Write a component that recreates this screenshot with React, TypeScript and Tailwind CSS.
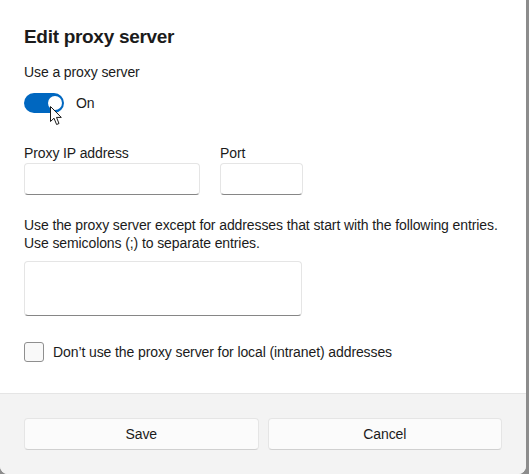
import { useState } from "react";

const FONT = { fontFamily: '"Liberation Sans", "Segoe UI", sans-serif' };

function Toggle({ on, onChange }: { on: boolean; onChange: (v: boolean) => void }) {
  return (
    <button
      className={`relative flex h-5 w-10 items-center rounded-full ${on ? "bg-[#0067c0]" : "border border-[#8a8a8a] bg-white"}`}
      onClick={() => onChange(!on)}
    >
      <span
        className={`absolute h-[14px] w-[14px] rounded-full ${on ? "left-[24px] bg-white" : "left-[4px] bg-[#5d5d5d]"}`}
      />
    </button>
  );
}

// Windows arrow pointer sitting over the toggle
function Pointer() {
  return (
    <svg className="pointer-events-none absolute left-[26px] top-[13px]" width="13" height="20" viewBox="0 0 13 20">
      <path
        d="M0.5 0.5 L0.5 15.5 L4 12.2 L6.6 18.5 L9 17.5 L6.5 11.4 L11.3 11.4 Z"
        fill="white"
        stroke="#1a1a1a"
        strokeWidth="1"
        strokeLinejoin="round"
      />
    </svg>
  );
}

function TextInput({ className }: { className: string }) {
  return (
    <input
      className={`rounded-[4px] border border-[#e5e5e5] border-b-[#868686] bg-white px-2 text-sm outline-none ${className}`}
    />
  );
}

export default function App() {
  const [enabled, setEnabled] = useState(true);
  const [bypassLocal, setBypassLocal] = useState(false);

  return (
    <div className="flex h-[474px] w-[529px] bg-[#8c8c8c] text-[#1b1b1b] tracking-[-0.1px]" style={FONT}>
      <div className="flex h-full w-[526px] flex-col overflow-hidden rounded-b-[8px] bg-white">
        <div className="flex flex-1 flex-col px-6 pt-[23px]">
          <h1 className="text-[19px] font-semibold leading-[28px] tracking-[-0.3px]">Edit proxy server</h1>

          <p className="mt-[11px] text-sm leading-5">Use a proxy server</p>
          <div className="relative mt-[11px] flex items-center gap-3">
            <Toggle on={enabled} onChange={setEnabled} />
            <span className="text-sm">{enabled ? "On" : "Off"}</span>
            <Pointer />
          </div>

          <div className="mt-[30px] flex gap-5">
            <label className="flex flex-col">
              <span className="text-sm leading-5">Proxy IP address</span>
              <TextInput className="h-8 w-[176px]" />
            </label>
            <label className="flex flex-col">
              <span className="text-sm leading-5">Port</span>
              <TextInput className="h-8 w-[83px]" />
            </label>
          </div>

          <p className="mt-[21px] whitespace-nowrap text-sm leading-[18px]">
            Use the proxy server except for addresses that start with the following entries.
            <br />
            Use semicolons (;) to separate entries.
          </p>
          <textarea className="mt-[9px] h-[55px] w-[278px] resize-none rounded-[4px] border border-[#e5e5e5] border-b-[#868686] bg-white px-2 py-1 text-sm outline-none" />

          <label className="mt-[26px] flex items-center gap-[9px]">
            <button
              className="h-5 w-5 rounded-[3px] border border-[#8f8f8f] bg-[#f9f9f9]"
              onClick={() => setBypassLocal(!bypassLocal)}
            >
              {bypassLocal && <span className="text-xs">✓</span>}
            </button>
            <span className="text-sm">Don&#8217;t use the proxy server for local (intranet) addresses</span>
          </label>
        </div>

        <div className="flex h-[81px] gap-[9px] border-t border-[#e5e5e5] bg-[#f3f3f3] px-6 pt-[24px]">
          <button className="h-8 flex-1 rounded-[4px] border border-[#e5e5e5] border-b-[#d0d0d0] bg-[#fbfbfb] text-sm">
            Save
          </button>
          <button className="h-8 flex-1 rounded-[4px] border border-[#e5e5e5] border-b-[#d0d0d0] bg-[#fbfbfb] text-sm">
            Cancel
          </button>
        </div>
      </div>
    </div>
  );
}
